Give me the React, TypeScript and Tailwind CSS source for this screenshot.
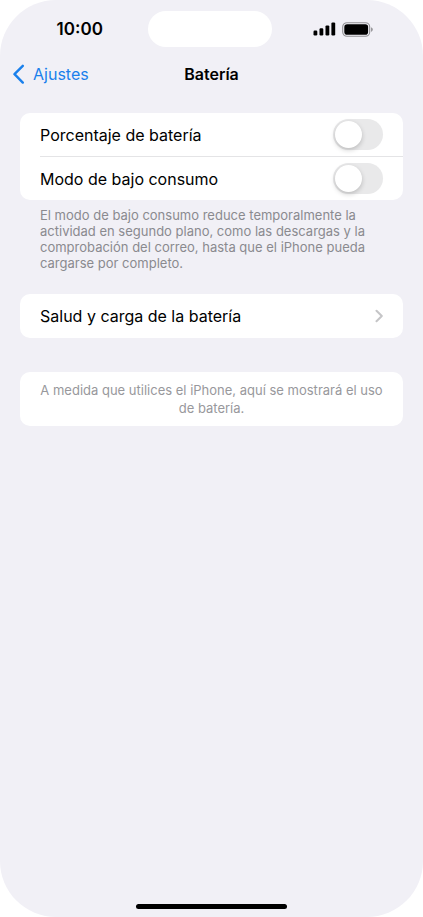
import { useState } from "react"

type SwitchRowProps = {
  id: string
  label: string
}

const SwitchRow: React.FC<SwitchRowProps> = ({ id, label }) => {
  const [on, setOn] = useState(false)

  return (
    <div className="box-content flex items-center justify-between h-[43px] pr-5">
      <label htmlFor={id} className="text-base text-black">
        {label}
      </label>
      <input
        id={id}
        type="checkbox"
        role="switch"
        checked={on}
        onChange={(e) => setOn(e.target.checked)}
        className="appearance-none flex items-center w-[50px] h-[31px] p-[2px] rounded-full bg-[#e9e9ea] checked:bg-[#34c759] cursor-pointer before:block before:size-[27px] before:rounded-full before:bg-white before:shadow-[0_2px_5px_rgba(0,0,0,0.2)] before:transition-transform checked:before:translate-x-[19px]"
      />
    </div>
  )
}

const StatusBar: React.FC = () => {
  return (
    <div className="grid grid-cols-[1fr_124px_1fr] items-center h-9 pr-1">
      <time className="text-center text-[17px] leading-6 font-semibold pl-3">10:00</time>
      <div className="h-9 rounded-full bg-white" />

      <div className="flex items-center justify-center gap-[6px] pr-1">
        <svg width="23" height="14" viewBox="0 0 23 14" fill="black" aria-hidden="true">
          <rect x="0.5" y="8.6" width="3.8" height="4.8" rx="1.2" />
          <rect x="6.5" y="6.2" width="3.8" height="7.2" rx="1.2" />
          <rect x="12.5" y="3.4" width="3.8" height="10" rx="1.2" />
          <rect x="18.4" y="0.4" width="3.8" height="13" rx="1.2" />
        </svg>
        <svg width="32" height="15" viewBox="0 0 32 15" fill="none" aria-hidden="true">
          <rect x="0.7" y="0.7" width="27" height="13.6" rx="4.3" stroke="black" strokeOpacity="0.4" strokeWidth="1.1" />
          <rect x="2.3" y="2.3" width="23.8" height="10.4" rx="2.8" fill="black" />
          <path d="M29.2 5.2v4.6c.9-.4 1.5-1.3 1.5-2.3s-.6-1.9-1.5-2.3z" fill="black" fillOpacity="0.45" />
        </svg>
      </div>
    </div>
  )
}

const App: React.FC = () => {
  return (
    <div className="bg-white">
      <div className="flex flex-col min-h-screen rounded-[56px] bg-[#f1f0f6] pt-[11px] font-['Inter',sans-serif] text-black">
        <StatusBar />

        {/* nav bar */}
        <header className="grid grid-cols-[1fr_auto_1fr] items-center h-11 mt-[5px] px-3">
          <a href="#ajustes" className="flex items-center gap-2 text-base text-[#1a80ec]">
            <svg width="13" height="20" viewBox="0 0 13 20" fill="none" aria-hidden="true">
              <path d="M10.8 1.8 2.5 10.2 10.8 18.600" stroke="currentColor" strokeWidth="2.400" strokeLinecap="round" strokeLinejoin="round" />
            </svg>
            Ajustes
          </a>
          <h1 className="text-base font-semibold">Batería</h1>
        </header>

        <main className="flex-1 px-5 pt-[17px]">
          <section>
            <div className="rounded-[10px] bg-white pl-5 divide-y divide-[#e4e4e6]">
              <SwitchRow id="porcentaje" label="Porcentaje de batería" />
              <SwitchRow id="bajo-consumo" label="Modo de bajo consumo" />
            </div>
            <p className="px-5 pt-[7px] text-[13px] leading-4 text-[#8a8a8f]">
              El modo de bajo consumo reduce temporalmente la actividad en segundo plano, como las descargas y la
              comprobación del correo, hasta que el iPhone pueda cargarse por completo.
            </p>
          </section>

          <a href="#salud" className="flex items-center justify-between h-11 mt-[23px] px-5 rounded-[10px] bg-white text-base">
            Salud y carga de la batería
            <svg width="8" height="14" viewBox="0 0 8 14" fill="none" aria-hidden="true">
              <path d="M1.500 1.700 6.800 7 1.500 12.300" stroke="#c5c5c7" strokeWidth="2" strokeLinecap="round" strokeLinejoin="round" />
            </svg>
          </a>

          <p className="mt-[34px] px-5 py-[9px] rounded-[10px] bg-white text-center text-[13px] leading-[18px] text-[#98989c]">
            A medida que utilices el iPhone, aquí se mostrará el uso de batería.
          </p>
        </main>

        {/* home indicator */}
        <div className="w-[151px] h-[5px] mx-auto mb-2 rounded-full bg-black" />
      </div>
    </div>
  )
}

export default App
